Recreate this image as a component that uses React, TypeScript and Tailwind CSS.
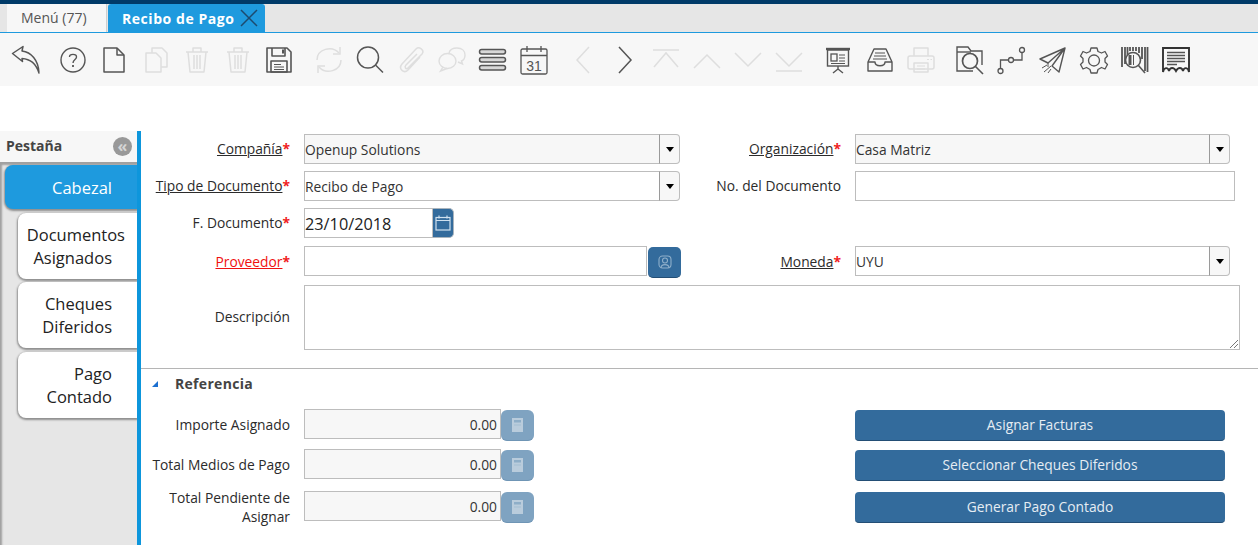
import React from 'react';

const ON = '#555555';
const OFF = '#dedede';

type IconProps = { c: string };

const Back = ({ c }: IconProps) => (
  <g stroke={c} strokeWidth="1.5" strokeLinejoin="round">
    <path d="M1.5 8.5 L12 1.5 L11 6 C20 7 27.5 15 28 28 C25.5 20 20 14 11 13.5 L11.5 16.5 Z" fill="#f7f7f7" />
  </g>
);
const Help = ({ c }: IconProps) => (
  <g stroke={c} fill="none" strokeWidth="1.4">
    <circle cx="15" cy="15" r="12" />
    <path d="M11.5 12 C11.5 8.5 18.5 8.5 18.5 12 C18.5 14.5 15 14.5 15 18" />
    <path d="M15 20 V22" strokeWidth="1.8" />
  </g>
);
const NewDoc = ({ c }: IconProps) => (
  <g stroke={c} fill="none" strokeWidth="1.5" strokeLinejoin="round">
    <path d="M5 3 H18 L25 10 V27 H5 Z" />
    <path d="M18 3 V10 H25" />
  </g>
);
const Copy = ({ c }: IconProps) => (
  <g stroke={c} fill="none" strokeWidth="1.5" strokeLinejoin="round">
    <path d="M11 8 V3 H21 L26 8 V22 H20" />
    <path d="M5 8 H15 L20 13 V27 H5 Z" />
  </g>
);
const Trash = ({ c }: IconProps) => (
  <g stroke={c} fill="none" strokeWidth="1.5" strokeLinejoin="round">
    <path d="M4 7 H26 M11 7 V3 H19 V7 M6 7 L8 27 H22 L24 7" />
    <path d="M12 10 V24 M15 10 V24 M18 10 V24" />
  </g>
);
const Save = ({ c }: IconProps) => (
  <g stroke={c} fill="none" strokeWidth="1.6" strokeLinejoin="round">
    <path d="M3 3 H23 L27 7 V27 H3 Z" />
    <path d="M8 3 V11 H21 V3" />
    <rect x="18" y="4.5" width="2" height="4" fill={c} stroke="none" />
    <rect x="7" y="16" width="16" height="11" />
    <path d="M10 19.5 H17 M10 22 H20 M10 24.5 H20" strokeWidth="1" />
  </g>
);
const Refresh = ({ c }: IconProps) => (
  <g stroke={c} fill="none" strokeWidth="1.5">
    <path d="M3 15 C3 4 18 0 25 8 M27 15 C27 26 12 30 5 22" />
    <path d="M26 2 V9 H19 M4 28 V21 H11" />
  </g>
);
const Search = ({ c }: IconProps) => (
  <g stroke={c} fill="none" strokeWidth="1.5">
    <circle cx="13" cy="12.5" r="10.5" />
    <path d="M20.5 20 L28 27.5" />
  </g>
);
const Attach = ({ c }: IconProps) => (
  <path
    d="M24 12 L12 25 C8 29 2 24 6 19 L20 4 C23 1 29 5 26 9 L12 23 C10 25 8 22 10 20 L21 9"
    stroke={c}
    fill="none"
    strokeWidth="1.5"
  />
);
const Chat = ({ c }: IconProps) => (
  <g stroke={c} fill="none" strokeWidth="1.4">
    <ellipse cx="10.5" cy="16" rx="8.5" ry="7.5" />
    <path d="M6 22 L3.5 26 L10 23.5" />
    <path d="M12 8 C13 4 17 3 20 3 C25 3 28 6 28 10 C28 13 27 15 24.5 16 L25.5 19 L21 17" />
  </g>
);
const List = ({ c }: IconProps) => (
  <g stroke={c} fill="#d8d8d8" strokeWidth="1.5">
    <rect x="1.5" y="4.5" width="26" height="4.5" rx="2.2" />
    <rect x="1.5" y="12.5" width="26" height="4.5" rx="2.2" />
    <rect x="1.5" y="20.5" width="26" height="4.5" rx="2.2" />
  </g>
);
const Cal = ({ c }: IconProps) => (
  <g stroke={c} fill="none" strokeWidth="1.3">
    <rect x="2" y="4" width="26" height="25" rx="1.5" />
    <path d="M2 10.5 H28 M8 1 V7 M22 1 V7" />
    <text x="15" y="25.5" textAnchor="middle" fontSize="14" fontWeight="400" fill={c} stroke="none" fontFamily="'Liberation Sans', sans-serif">
      31
    </text>
  </g>
);
const Prev = ({ c }: IconProps) => <path d="M20 2 L8 15 L20 28" stroke={c} fill="none" strokeWidth="1.5" />;
const Next = ({ c }: IconProps) => <path d="M9 2 L21 15 L9 28" stroke={c} fill="none" strokeWidth="1.5" />;
const First = ({ c }: IconProps) => <path d="M2 5 H28 M3 22 L15 8 L27 22" stroke={c} fill="none" strokeWidth="1.5" />;
const Up = ({ c }: IconProps) => <path d="M2 23 L15 10 L28 23" stroke={c} fill="none" strokeWidth="1.5" />;
const Down = ({ c }: IconProps) => <path d="M2 8 L15 21 L28 8" stroke={c} fill="none" strokeWidth="1.5" />;
const Last = ({ c }: IconProps) => <path d="M2 8 L15 21 L28 8 M2 26 H28" stroke={c} fill="none" strokeWidth="1.5" />;
const Board = ({ c }: IconProps) => (
  <g stroke={c} fill="none" strokeWidth="1.4">
    <path d="M3 4 H27" strokeWidth="2.4" />
    <rect x="4.5" y="5" width="21" height="16" />
    <rect x="8" y="9" width="6" height="7" strokeWidth="1.3" />
    <path d="M16 10 H22 M16 13 H22 M16 16 H22 M8 18.5 H22" strokeWidth="1" />
    <path d="M15 21 V24 M15 24 L10 28 M15 24 L20 28" />
  </g>
);
const Inbox = ({ c }: IconProps) => (
  <g stroke={c} fill="none" strokeWidth="1.4" strokeLinejoin="round">
    <path d="M3 17 L9 4 H21 L27 17 V26 H3 Z" />
    <path d="M3 17 H10 C10 22 20 22 20 17 H27" />
    <path d="M10 8 H20 M9 11 H21 M8 14 H22" strokeWidth="1.2" />
  </g>
);
const Printer = ({ c }: IconProps) => (
  <g stroke={c} fill="none" strokeWidth="1.5" strokeLinejoin="round">
    <path d="M8 11 V3 H22 V11" />
    <rect x="2" y="11" width="26" height="13" rx="2" />
    <rect x="8" y="18" width="14" height="9" />
    <path d="M11 21 H19 M11 24 H19 M21 14.5 H23 M24.5 14.5 H26" strokeWidth="1.2" />
  </g>
);
const FolderSearch = ({ c }: IconProps) => (
  <g stroke={c} fill="none" strokeWidth="1.4">
    <path d="M18 26 H2 V2 H13 L16 6 H27 V20" />
    <path d="M2 7 H16" />
    <circle cx="15" cy="16" r="7.5" strokeWidth="1.7" />
    <path d="M20.5 21.5 L28 29" strokeWidth="1.6" />
  </g>
);
const Flow = ({ c }: IconProps) => (
  <g stroke={c} fill="none" strokeWidth="1.3">
    <circle cx="4.5" cy="26" r="2.5" />
    <circle cx="15" cy="15" r="2.5" />
    <circle cx="26" cy="5" r="2.5" />
    <path d="M4.5 23.5 V15 H12.5 M17.5 15 H26 V7.5" />
  </g>
);
const Plane = ({ c }: IconProps) => (
  <g stroke={c} fill="none" strokeWidth="1.4" strokeLinejoin="round">
    <path d="M27 3 L2 14 L10 18 L27 3 L14 21 L21 27 Z" />
    <path d="M10 18 L10 22 M13 21 L6 27 M9 20 L4 23 M13 24 L10 28" strokeWidth="1" />
  </g>
);
const Gear = ({ c }: IconProps) => (
  <g stroke={c} fill="none" strokeWidth="1.3" strokeLinejoin="round">
    <path d="M12 3 H18 L19 6.5 L22.5 8 L26 6.5 L28.5 11 L26 13.5 V17 L28.5 19.5 L26 24 L22.5 22.5 L19 24.5 L18 28 H12 L11 24.5 L7.5 22.5 L4 24 L1.5 19.5 L4 17 V13.5 L1.5 11 L4 6.5 L7.5 8 L11 6.5 Z" />
    <circle cx="15" cy="15.5" r="5.5" />
  </g>
);
const Barcode = ({ c }: IconProps) => (
  <g stroke={c} fill="none">
    <path d="M2 2 V22 M5 2 V19 M7.5 2 V10 M10 2 V6 M13 2 V6 M16 2 V6 M19 2 V8 M22 2 V14 M25 2 V26 M27.5 2 V27" strokeWidth="1.8" />
    <circle cx="13" cy="15" r="7.5" strokeWidth="1.6" fill="#f7f7f7" />
    <path d="M10 10 V20" strokeWidth="3" />
    <path d="M13.5 10 V20" strokeWidth="1" />
    <path d="M18.5 20.5 L25 28" strokeWidth="1.6" />
  </g>
);
const Receipt = ({ c }: IconProps) => (
  <g stroke="#333" fill="none">
    <path d="M2 27 V3 H28 V27 C27 22 23 22 22 26 C21 22 17 22 15 26 C13 22 9 22 8 26 C7 22 3 22 2 27 Z" strokeWidth="1.9" />
    <path d="M6 7.5 H24 M6 10.5 H24 M6 13.5 H24 M6 16.5 H24 M6 19.5 H16" stroke={c} strokeWidth="1.7" />
  </g>
);

const tools: { I: React.FC<IconProps>; on?: boolean; cls: string }[] = [
  { I: Back, on: true, cls: '' },
  { I: Help, on: true, cls: 'ml-[6px]' },
  { I: NewDoc, on: true, cls: '' },
  { I: Copy, cls: 'ml-[1px]' },
  { I: Trash, cls: '' },
  { I: Trash, cls: '' },
  { I: Save, on: true, cls: '' },
  { I: Refresh, cls: 'ml-[9px]' },
  { I: Search, on: true, cls: '' },
  { I: Attach, cls: '' },
  { I: Chat, cls: '' },
  { I: List, on: true, cls: '' },
  { I: Cal, on: true, cls: '' },
  { I: Prev, cls: 'ml-[9px]' },
  { I: Next, on: true, cls: '' },
  { I: First, cls: '' },
  { I: Up, cls: '' },
  { I: Down, cls: '' },
  { I: Last, cls: '' },
  { I: Board, on: true, cls: 'ml-[8px]' },
  { I: Inbox, on: true, cls: 'ml-[1px]' },
  { I: Printer, cls: '' },
  { I: FolderSearch, on: true, cls: 'ml-[8px]' },
  { I: Flow, on: true, cls: '' },
  { I: Plane, on: true, cls: 'ml-[1px]' },
  { I: Gear, on: true, cls: '' },
  { I: Barcode, on: true, cls: '' },
  { I: Receipt, on: true, cls: '' },
];

const Label = ({
  text,
  req,
  link,
  red,
  w = 'w-[163px]',
  shift = '-mt-[1px]',
}: {
  text: string;
  req?: boolean;
  link?: boolean;
  red?: boolean;
  w?: string;
  shift?: string;
}) => (
  <div className={`${w} ${shift} shrink-0 pr-[14px] text-right text-[13.8px] leading-[19px] ${red ? 'text-[#f01010]' : 'text-[#2b2b2b]'}`}>
    <span className={link ? 'underline' : ''}>{text}</span>
    {req && <span className="font-bold text-[#f02020]">*</span>}
  </div>
);

const Combo = ({ value, w, grey }: { value: string; w: string; grey?: boolean }) => (
  <div className={`flex h-[30px] ${w}`}>
    <div className={`flex-1 border border-[#bdbdbd] border-r-[#9a9a9a] text-[13.8px] leading-[29px] text-[#333] ${grey ? 'bg-[#f7f7f7]' : 'bg-white'}`}>
      {value}
    </div>
    <div className="flex w-[20px] items-center justify-center rounded-r-[4px] border border-l-0 border-[#bdbdbd] bg-[#f7f7f7]">
      <div className="h-0 w-0 border-x-[4px] border-t-[5px] border-x-transparent border-t-black" />
    </div>
  </div>
);

const CalcIcon = () => (
  <svg width="11" height="14" viewBox="0 0 11 14">
    <rect x="0" y="0" width="11" height="14" fill="#b9ccdc" />
    <rect x="2" y="2" width="7" height="2.5" fill="#8eaec8" />
    <rect x="2" y="6.5" width="7" height="1" fill="#a3bdd2" />
  </svg>
);

const Amount = () => (
  <div className="flex">
    <div className="h-[30px] w-[197px] border border-[#bdbdbd] bg-[#f7f7f7] pr-[3px] text-right text-[13.8px] leading-[29px] text-[#333]">
      0.00
    </div>
    <div className="mt-[1px] flex h-[31px] w-[33px] items-center justify-center rounded-[6px] border-b border-[#6f95b5] bg-[#7fa3c1]">
      <CalcIcon />
    </div>
  </div>
);

const Action = ({ text }: { text: string }) => (
  <div className="ml-[321px] flex h-[31px] w-[370px] items-center justify-center rounded-[4px] border-b border-[#234e75] bg-[#336b9c] pt-[2px] text-[13.8px] text-[#e6edf3]">
    {text}
  </div>
);

const SideTab = ({ l1, l2, pr1, pr2 }: { l1: string; l2: string; pr1: string; pr2: string }) => (
  <div className="ml-[18px] flex h-[66px] flex-col justify-center rounded-l-[8px] bg-white text-right text-[16.5px] leading-[23px] text-[#222] shadow-[0_1px_2px_1px_#8f8f8f]">
    <span className={pr1}>{l1}</span>
    <span className={pr2}>{l2}</span>
  </div>
);

export default function App() {
  return (
    <div className="flex h-[545px] w-[1258px] flex-col overflow-hidden bg-white font-['Open_Sans','Noto_Sans',sans-serif]">
      <div className="h-[4px] bg-[#003a68]" />
      <div className="flex h-[28px] bg-[#e6e6e6] pl-[7px]">
        <div className="w-[100px] border-r border-[#cfcfcf] bg-[#f7f7f7] pl-[14px] text-[14px] leading-[28px] text-[#555]">Menú (77)</div>
        <div className="ml-[1px] flex w-[157px] items-center rounded-t-[3px] bg-[#1e9ade] pl-[14px]">
          <span className="text-[14px] font-bold tracking-[0.55px] text-white">Recibo de Pago</span>
          <svg className="ml-[6px]" width="18" height="18" viewBox="0 0 18 18">
            <path d="M1 1 L17 17 M17 1 L1 17" stroke="#1d4a6e" strokeWidth="1.5" />
          </svg>
        </div>
      </div>
      <div className="h-[1px] bg-[#1e9ade]" />
      <div className="flex h-[53px] items-center bg-[#f7f7f7] pl-[5px]">
        {tools.map(({ I, on, cls }, i) => (
          <div key={i} className={`flex w-[41px] justify-center ${cls}`}>
            <svg width="30" height="30" viewBox="0 0 30 30">
              <I c={on ? ON : OFF} />
            </svg>
          </div>
        ))}
      </div>
      <div className="h-[45px]" />
      <div className="flex flex-1">
        <div className="flex w-[137px] shrink-0 flex-col">
          <div className="flex h-[31px] items-center justify-between bg-[#f7f7f7] pl-[6px] pr-[5px]">
            <span className="-mt-[2px] text-[14px] font-bold text-[#444]">Pestaña</span>
            <div className="-mt-[1px] flex h-[19px] w-[19px] items-center justify-center rounded-full bg-[#999] text-[16px] font-bold leading-[16px] text-[#d5d5d5]">
              «
            </div>
          </div>
          <div className="flex flex-1 flex-col gap-[3px] bg-[#e6e6e6] pt-[3px] shadow-[inset_2px_3px_2px_#a0a0a0]">
            <div className="ml-[5px] mb-[1px] flex h-[44px] items-center justify-end rounded-l-[8px] bg-[#1e9ade] pr-[25px] pt-[2px] text-[16.5px] text-white shadow-[0_1px_2px_1px_#8f8f8f]">
              Cabezal
            </div>
            <SideTab l1="Documentos" l2="Asignados" pr1="pr-[12px]" pr2="pr-[25px]" />
            <SideTab l1="Cheques" l2="Diferidos" pr1="pr-[25px]" pr2="pr-[25px]" />
            <div className="mt-[1px]">
              <SideTab l1="Pago" l2="Contado" pr1="pr-[25px]" pr2="pr-[25px]" />
            </div>
          </div>
        </div>
        <div className="flex-1 border-l-4 border-[#0d96dc] pt-[3px]">
          <div className="flex h-[30px] items-center">
            <Label text="Compañía" req link />
            <Combo value="Openup Solutions" w="w-[376px]" grey />
            <Label text="Organización" req link w="w-[175px]" />
            <Combo value="Casa Matriz" w="w-[375px]" grey />
          </div>
          <div className="mt-[7px] flex h-[30px] items-center">
            <Label text="Tipo de Documento" req link />
            <Combo value="Recibo de Pago" w="w-[376px]" />
            <Label text="No. del Documento" w="w-[175px]" />
            <div className="h-[30px] w-[380px] border border-[#bdbdbd]" />
          </div>
          <div className="mt-[7px] flex h-[30px] items-center">
            <Label text="F. Documento" req />
            <div className="h-[30px] w-[129px] border border-[#bdbdbd] text-[16.3px] leading-[30px] text-[#222]">23/10/2018</div>
            <div className="flex h-[30px] w-[21px] items-center justify-center rounded-r-[5px] border border-l-0 border-[#a9b4bd] bg-[#336b9c]">
              <svg width="16" height="16" viewBox="0 0 16 16" fill="none" stroke="#cfe0ee" strokeWidth="1.2">
                <rect x="1" y="2.5" width="14" height="12.5" />
                <path d="M1 5.5 H15 M4 0.5 V3.5 M12 0.5 V3.5" />
              </svg>
            </div>
          </div>
          <div className="mt-[8px] flex h-[30px] items-center">
            <Label text="Proveedor" req link red shift="mt-0" />
            <div className="h-[30px] w-[343px] border border-[#bdbdbd]" />
            <div className="ml-[1px] mt-[2px] flex h-[31px] w-[33px] items-center justify-center rounded-[5px] border-b border-[#234e75] bg-[#336b9c]">
              <svg width="14" height="14" viewBox="0 0 14 14" fill="none" stroke="#8fafca" strokeWidth="1.1">
                <rect x="1" y="1" width="12" height="12" rx="3.5" />
                <circle cx="7" cy="5.5" r="2.5" />
                <path d="M3 13 C3 8.5 11 8.5 11 13" />
              </svg>
            </div>
            <Label text="Moneda" req link w="w-[174px]" shift="mt-0" />
            <Combo value="UYU" w="w-[375px]" />
          </div>
          <div className="mt-[9px] flex">
            <div className="flex h-[65px] items-center">
              <Label text="Descripción" shift="-mt-[3px]" />
            </div>
            <div className="relative h-[65px] w-[936px] border border-[#bdbdbd]">
              <svg className="absolute bottom-[1px] right-[1px]" width="9" height="9" viewBox="0 0 9 9" stroke="#777" strokeWidth="1">
                <path d="M1 9 L9 1 M5 9 L9 5" />
              </svg>
            </div>
          </div>
          <div className="mt-[18px] h-[1px] bg-[#b5b5b5]" />
          <div className="mt-[4px] flex h-[20px] items-center">
            <div className="ml-[11px] mt-[1px] h-0 w-0 border-b-[6px] border-l-[6px] border-b-[#1b6fd0] border-l-transparent" />
            <span className="ml-[17px] text-[14px] font-bold tracking-[0.3px] text-[#444]">Referencia</span>
          </div>
          <div className="mt-[17px] flex h-[30px] items-center">
            <Label text="Importe Asignado" />
            <Amount />
            <Action text="Asignar Facturas" />
          </div>
          <div className="mt-[10px] flex h-[30px] items-center">
            <Label text="Total Medios de Pago" />
            <Amount />
            <Action text="Seleccionar Cheques Diferidos" />
          </div>
          <div className="mt-[12px] flex h-[30px] items-center">
            <Label text="Total Pendiente de Asignar" />
            <Amount />
            <Action text="Generar Pago Contado" />
          </div>
        </div>
      </div>
    </div>
  );
}
